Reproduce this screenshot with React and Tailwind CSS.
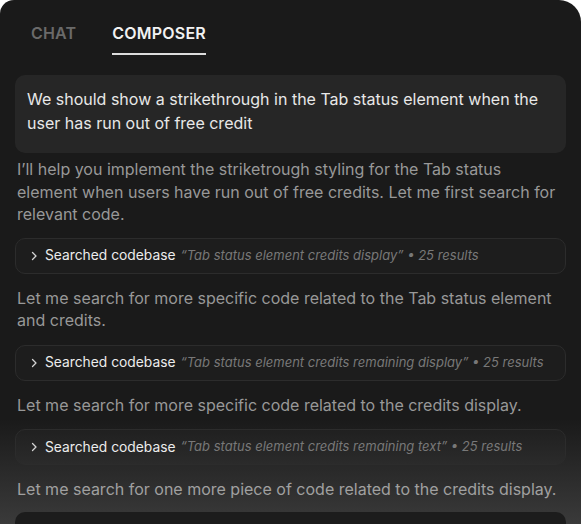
import React from "react";

function Chevron() {
  return (
    <svg width="12" height="12" viewBox="0 0 12 12" fill="none" className="shrink-0">
      <path d="M4.5 2.5 L8 6 L4.5 9.5" stroke="#d4d4d4" strokeWidth="1.3" strokeLinecap="round" strokeLinejoin="round" />
    </svg>
  );
}

function SearchCard({ query }) {
  return (
    <div className="flex items-center h-[36px] rounded-[10px] border border-[#2c2c2c] bg-white/[0.015] pl-[12px] whitespace-nowrap">
      <Chevron />
      <span className="ml-[5px] text-[13.8px] text-[#ececec]">Searched codebase</span>
      <span className="ml-[5px] text-[13px] italic text-[#787878]">“{query}” • 25 results</span>
    </div>
  );
}

export default function App() {
  return (
    <div className="w-[581px] h-[524px] bg-white overflow-hidden" style={{ fontFamily: "Inter, 'Noto Sans', sans-serif" }}>
      <div className="relative w-[581px] h-[524px] bg-[linear-gradient(to_bottom,#1a1a1a_80%,#3a3a3a)] rounded-tl-[14px] rounded-tr-[22px] overflow-hidden">
        <div className="flex gap-[36px] pl-[31px] pt-[23px]">
          <div className="text-[16px] font-semibold tracking-[0.2px] text-[#6a6a6a] leading-[20px]">CHAT</div>
          <div className="flex flex-col">
            <div className="text-[16px] font-semibold tracking-[0.2px] text-[#f2f2f2] leading-[20px]">COMPOSER</div>
            <div className="mt-[10px] h-[2px] bg-[#dcdcdc]"></div>
          </div>
        </div>
        <div className="px-[15px] pt-[20px] flex flex-col">
          <div className="rounded-[10px] bg-[#262626] px-[12px] pt-[12px] pb-[18px] text-[16px] leading-[24px] text-[#e8e8e8]">
            We should show a strikethrough in the Tab status element when the user has run out of free credit
          </div>
          <p className="mt-[5px] px-[2px] text-[16px] leading-[22.5px] text-[#989898]">
            I’ll help you implement the striketrough styling for the Tab status element when users have run out of free credits. Let me first search for relevant code.
          </p>
          <div className="mt-[12px]">
            <SearchCard query="Tab status element credits display" />
          </div>
          <p className="mt-[13px] px-[2px] text-[16px] leading-[22.5px] text-[#989898]">
            Let me search for more specific code related to the Tab status element and credits.
          </p>
          <div className="mt-[13px]">
            <SearchCard query="Tab status element credits remaining display" />
          </div>
          <p className="mt-[13px] px-[2px] text-[16px] leading-[22.5px] text-[#989898]">
            Let me search for more specific code related to the credits display.
          </p>
          <div className="mt-[13px]">
            <SearchCard query="Tab status element credits remaining text" />
          </div>
          <p className="mt-[13px] px-[2px] text-[16px] leading-[22.5px] text-[#a0a0a0]">
            Let me search for one more piece of code related to the credits display.
          </p>
          <div className="mt-[11px] h-[60px] rounded-[10px] bg-[#1c1c1c]"></div>
        </div>
      </div>
    </div>
  );
}
